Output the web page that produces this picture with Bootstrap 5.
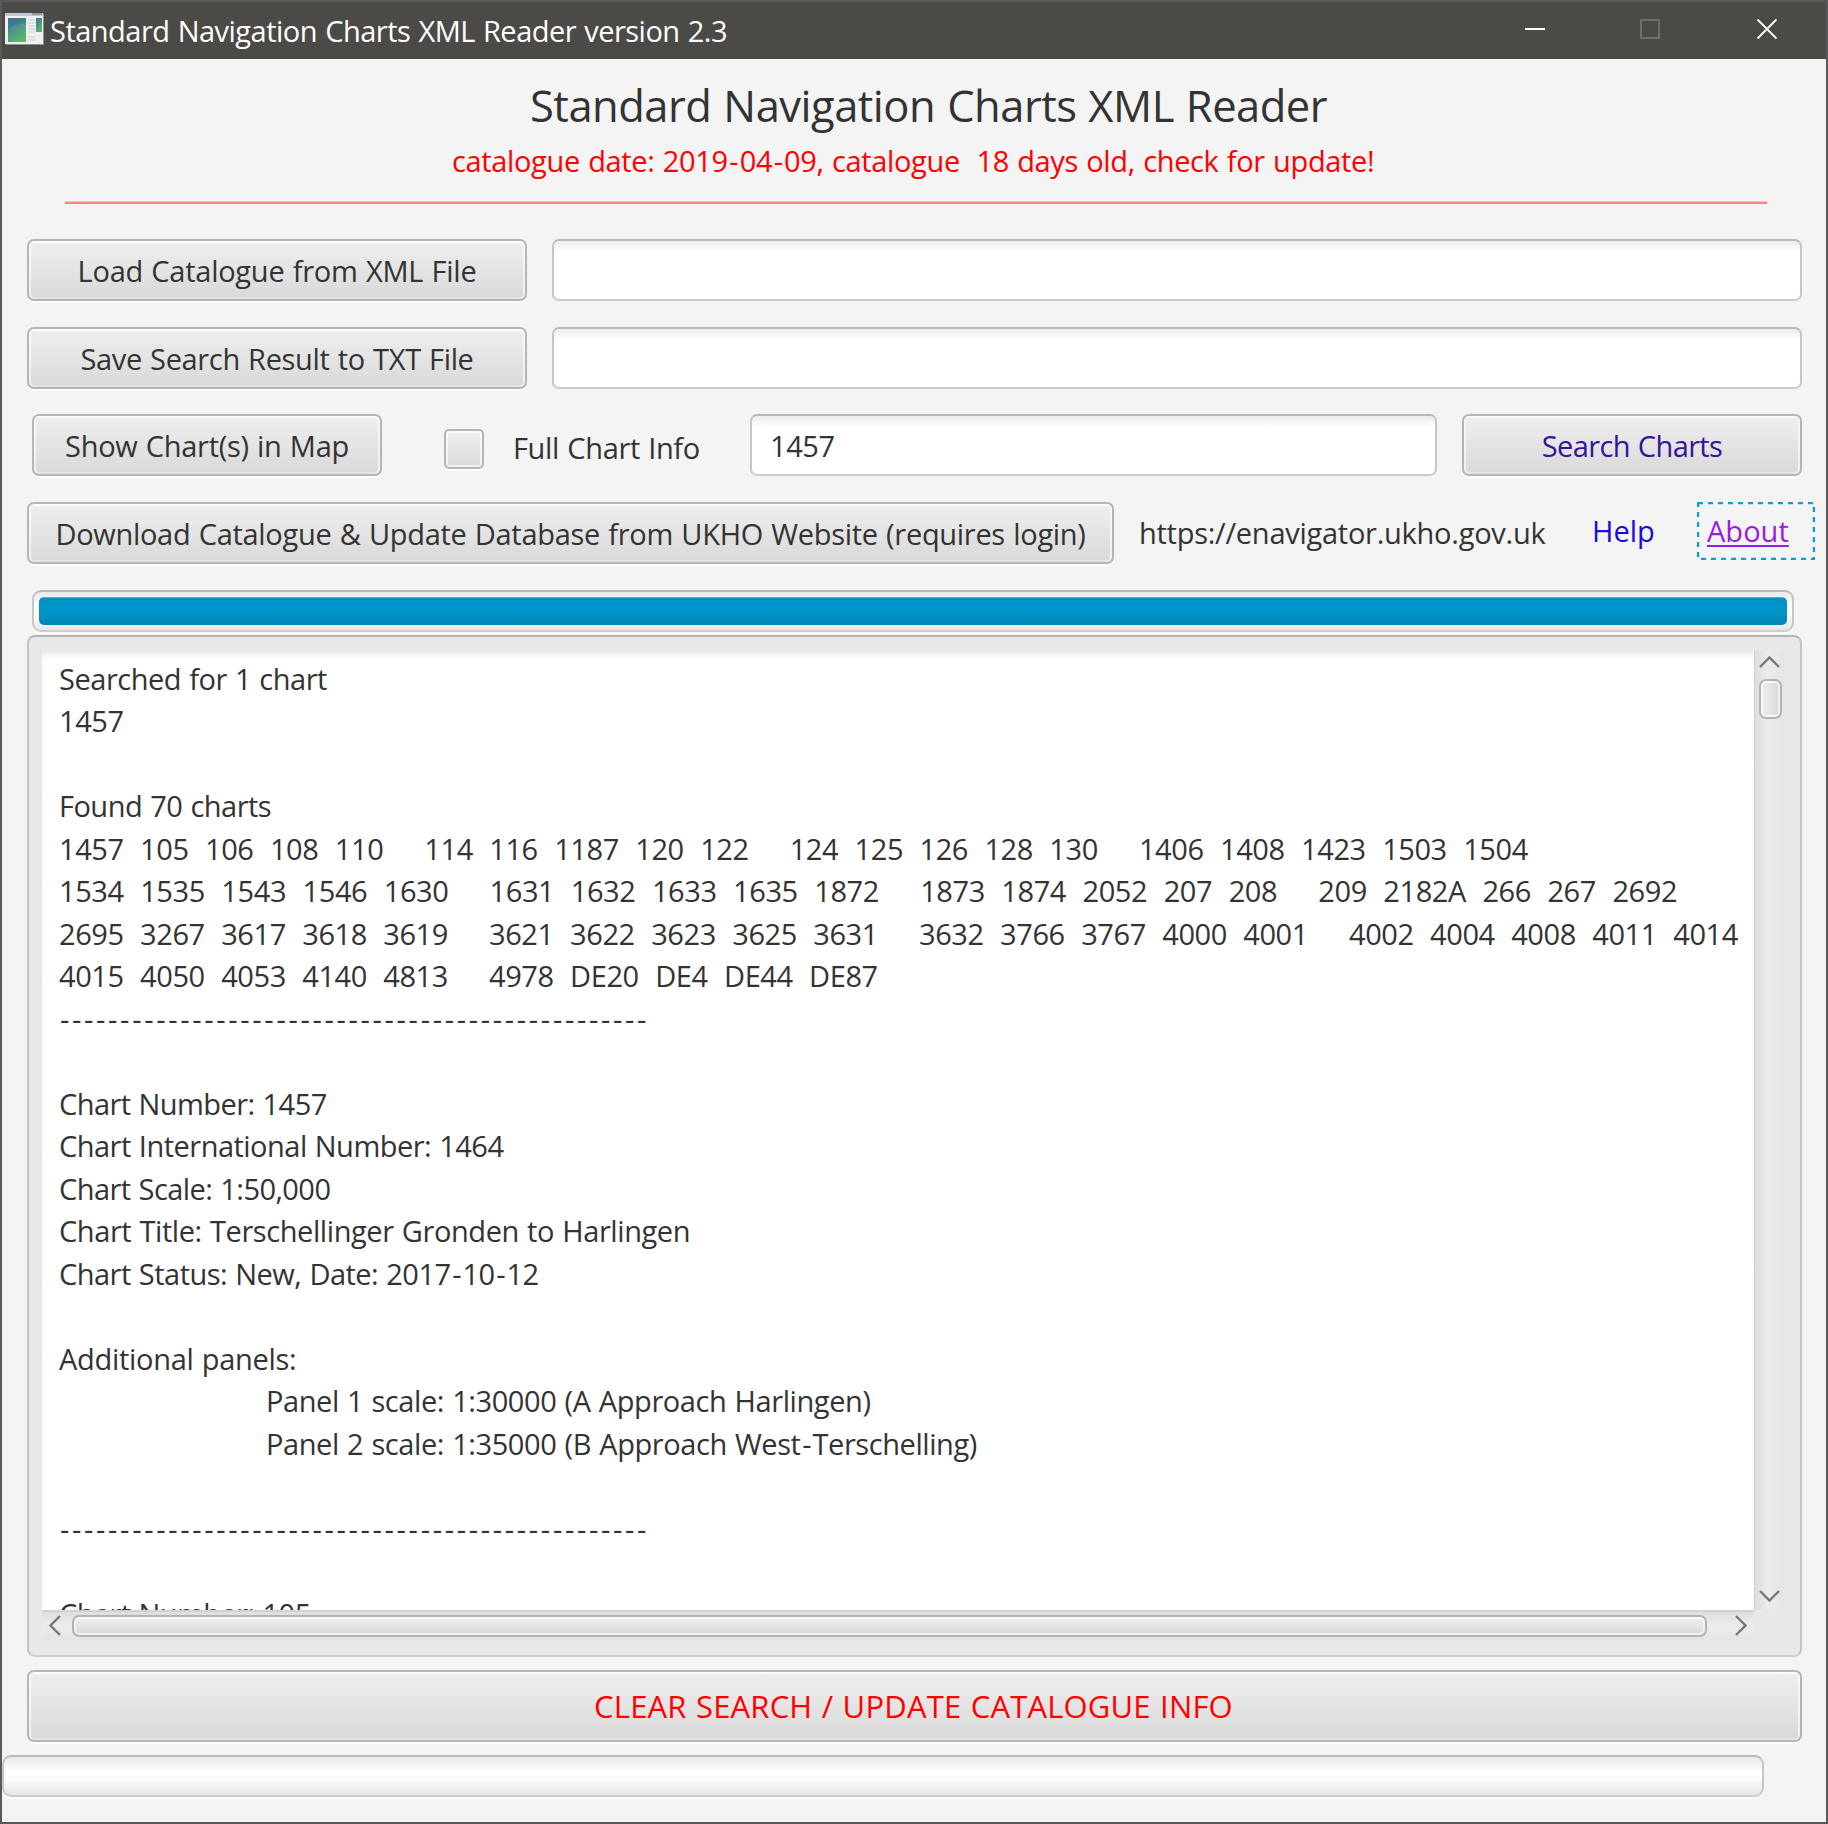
<!DOCTYPE html>
<html lang="en">
<head>
<meta charset="utf-8">
<title>Standard Navigation Charts XML Reader version 2.3</title>
<link href="https://cdn.jsdelivr.net/npm/bootstrap@5.3.0/dist/css/bootstrap.min.css" rel="stylesheet">
<style>
body{margin:0;font-family:"Open Sans","Noto Sans",sans-serif;font-size:29px;line-height:42.5px;color:#333;background:#f4f4f4;overflow:hidden}
.fx-window{width:1828px;height:1824px;border:2px solid #595959;background:#f4f4f4}
.fx-titlebar{height:57px;background:#4b4a47;color:#fff;padding-left:3px}
.fx-titlebar .t{margin:8px 0 0 5px;letter-spacing:-.51px}
.fx-controls{margin-right:49px}
.t{white-space:pre;display:inline-block;word-spacing:1.1px;letter-spacing:-.3px}
.hy{letter-spacing:1px;margin-left:1.6px}
.ls-25{letter-spacing:-.26px}.ls-35{letter-spacing:-.35px}.ls-42{letter-spacing:-.42px}.ls-47{letter-spacing:-.47px}.ls-52{letter-spacing:-.52px}.ls-56{letter-spacing:-.57px}.ls-62{letter-spacing:-.62px}
.ls-dash{letter-spacing:2.69px}.ls-0{letter-spacing:.03px}
.fx-heading{font-size:43.5px;line-height:60px;margin:17px 0 0 528px}
.fx-heading .t{letter-spacing:-.49px}
.fx-status{color:red;margin:4px 0 0 450px}
.fx-rule{height:3px;background:linear-gradient(#ffc4c2 1px,#ff8080 1px);margin:18.5px 59px 0 63px}
.fx-line{margin:25.5px 0 0 25px}
.fx-line.first{margin-top:35.25px}
.fx-btn{height:62px;padding:0;border:2px solid #b5b5b5;border-radius:7px;color:#333;font-size:29px;line-height:59px;
 background:linear-gradient(#efefef,#d9d9d9);box-shadow:inset 0 2px 0 #fcfcfc,inset 2px 0 0 rgba(255,255,255,.6),inset -2px 0 0 rgba(255,255,255,.6),inset 0 -2px 0 #e3e3e3,0 2px 0 #fcfcfc}
.w-file{width:500px}.w-map{width:350px;margin-left:5px}.w-search{width:340px;margin-left:25px;color:#36139a}.w-down{width:1087px}
.fx-btn .t{position:relative;vertical-align:top}
.fx-field{width:1250px;margin-left:25px;height:62px;border:2px solid;border-color:#b9b9b9 #c6c6c6 #cdcdcd;border-radius:7px;background:linear-gradient(#ececec,#fff 11px);padding:0 18px;line-height:59px}
.fx-query{width:687px;margin-left:0}
.fx-check{width:40px;height:40px;margin:15px 0 0 62px;border:2px solid #b5b5b5;border-radius:5px;background:linear-gradient(#efefef,#dadada);box-shadow:inset 0 0 0 2px rgba(255,255,255,.65),0 2px 0 #fcfcfc}
.fx-label{margin:13px 0 0 29px;width:237px}
.fx-url{margin:10px 0 0 25px;width:453px}
.fx-help{margin-top:8px;width:105px;color:#1a0be0;text-decoration:none}
.fx-about{height:60px;width:118px;color:#9a1ce0;text-decoration:none;padding:8px 0 0 10px}
.fx-about .t{text-decoration:underline;text-decoration-thickness:2px;text-underline-offset:3px;text-decoration-skip-ink:none}
.fx-bar{width:1762px;height:42px;border:2px solid;border-color:#b9b9b9 #c6c6c6 #cdcdcd;border-radius:9px;padding:5px;background:linear-gradient(#e9e9e9,#fff 40%,#fbfbfb 60%,#e7e7e7);box-shadow:0 2px 0 #fcfcfc}
.fx-bar.full{margin:24px 0 0 30px}
.fx-bar.idle{margin-top:13px}
.fx-bar>div{height:28px;border-radius:5px;background:linear-gradient(#4fb0d2 0 1px,#008fc0 1px,#0096c9 35%,#0094c6 60%,#0087b5)}
.fx-row4{height:64px}
.fx-area{width:1775px;height:1022px;margin:3px 0 0 25px;border:2px solid;border-color:#b5b5b5 #c4c4c4 #cdcdcd;border-radius:8px;background:#e8e8e8;padding:13px 0 0 13px}
.fx-text{width:1712px;height:960px;overflow:hidden;background:linear-gradient(#e8e8e8,#fff 9px);padding:8px 0 0 17px}
.fx-text>div{height:42.5px;white-space:nowrap}
.fx-text>.panel-line{padding-left:207px}
.fx-text>.dash-line{padding-left:1px}
.fx-vs{width:30px;height:960px;border-left:1px solid #d2d2d2;background:linear-gradient(90deg,#dedede,#ececec 45%,#e5e5e5);border-radius:0 4px 4px 0;padding-top:6px}
.fx-vs svg:last-child{margin-top:871px}
.fx-hs{width:1712px;height:30px;border-top:2px solid #d2d2d2;background:linear-gradient(#dedede,#ececec 45%,#e5e5e5);border-radius:0 0 4px 4px;padding:3px 0 0 7px}
.fx-hs svg:last-child{margin-left:28px}
.fx-vthumb{width:23px;height:40px;border:2px solid #b3b3b3;border-radius:7px;background:linear-gradient(90deg,#f0f0f0,#d8d8d8);box-shadow:inset 0 0 0 2px rgba(255,255,255,.7);margin:11px 0 0 4px}
.fx-hthumb{width:1635px;height:22px;border:2px solid #b3b3b3;border-radius:7px;background:linear-gradient(#f0f0f0,#d8d8d8);box-shadow:inset 0 0 0 2px rgba(255,255,255,.6);margin-left:11px}
.fx-clear{width:1775px;height:72px;line-height:66px;font-size:31px;color:red;margin:13px 0 0 25px}
.fx-clear .t{letter-spacing:.18px;left:-1px}
svg{display:block;flex:none}
.arrow{fill:none;stroke:#777;stroke-width:2.4}
</style>
</head>
<body>
<main class="fx-window d-flex flex-column">
 <header class="fx-titlebar d-flex align-items-start">
  <svg width="40" height="44" viewBox="0 0 40 44"><defs><linearGradient id="g" x2=".6" y2="1"><stop offset="0" stop-color="#3f73a0"/><stop offset="1" stop-color="#5cb56c"/></linearGradient></defs><rect x="1" y="12" width="38" height="31" fill="#8d9092"/><rect x="0" y="11" width="38" height="31" fill="#eef0f1"/><rect x="0" y="11" width="38" height="3" fill="#c0c9d0"/><rect x="27" y="11" width="10" height="2" fill="#8c979f"/><rect x="3" y="16" width="18" height="24" fill="url(#g)"/><path d="M3 28Q8 22 21 21V16H3z" fill="#3b7392" opacity=".6"/><path d="M23 18h7M23 21h7M23 24h7M23 27h7M23 30h7M23 35h7M23 38h7" stroke="#c9cdd0"/><rect x="31" y="16" width="6" height="14" fill="url(#g)"/></svg>
  <span class="t">Standard Navigation Charts XML Reader version 2.3</span>
  <svg class="fx-controls ms-auto" width="252" height="57" viewBox="0 0 252 57"><path d="M0 27h20" stroke="#fff" stroke-width="2"/><rect x="116" y="18" width="18" height="18" fill="none" stroke="#6d6c6a" stroke-width="2"/><path d="M232.500 17.500l19 19m0-19l-19 19" stroke="#fff" stroke-width="1.800"/></svg>
 </header>
 <div class="fx-heading"><span class="t">Standard Navigation Charts XML Reader</span></div>
 <div class="fx-status"><span class="t ls-35">catalogue date: 2019<span class="hy">-</span>04<span class="hy">-</span>09, catalogue  18 days old, check for update!</span></div>
 <div class="fx-rule"></div>
 <section class="fx-line first d-flex"><button class="btn fx-btn w-file"><span class="t ls-25">Load Catalogue from XML File</span></button><div class="fx-field"></div></section>
 <section class="fx-line d-flex"><button class="btn fx-btn w-file"><span class="t ls-35">Save Search Result to TXT File</span></button><div class="fx-field"></div></section>
 <section class="fx-line d-flex"><button class="btn fx-btn w-map"><span class="t">Show Chart(s) in Map</span></button><div class="fx-check"></div><label class="fx-label"><span class="t ls-35">Full Chart Info</span></label><div class="fx-field fx-query"><span class="t ls-42">1457</span></div><button class="btn fx-btn w-search"><span class="t ls-62">Search Charts</span></button></section>
 <section class="fx-line fx-row4 d-flex"><button class="btn fx-btn w-down"><span class="t">Download Catalogue &amp; Update Database from UKHO Website (requires login)</span></button><span class="fx-url"><span class="t ls-25">https://enavigator.ukho.gov.uk</span></span><a class="fx-help"><span class="t ls-0">Help</span></a><a class="fx-about position-relative"><svg class="position-absolute top-0 start-0" width="118" height="58"><rect x="1" y="1" width="116" height="56" fill="none" stroke="#00a0d8" stroke-width="2.400" stroke-dasharray="5 5"/></svg><span class="t ls-0">About</span></a></section>
 <div class="fx-bar full"><div></div></div>
 <section class="fx-area">
  <div class="d-flex"><div class="fx-text">
<div><span class="t ls-47">Searched for 1 chart</span></div>
<div><span class="t ls-42">1457</span></div>
<div></div>
<div><span class="t ls-52">Found 70 charts</span></div>
<div><span class="t ls-42">1457  105  106  108  110     114  116  1187  120  122     124  125  126  128  130     1406  1408  1423  1503  1504</span></div>
<div><span class="t" style="letter-spacing:-.403px">1534  1535  1543  1546  1630     1631  1632  1633  1635  1872     1873  1874  2052  207  208     209  2182A  266  267  2692</span></div>
<div><span class="t ls-42">2695  3267  3617  3618  3619     3621  3622  3623  3625  3631     3632  3766  3767  4000  4001     4002  4004  4008  4011  4014</span></div>
<div><span class="t ls-42">4015  4050  4053  4140  4813     4978  DE20  DE4  DE44  DE87</span></div>
<div class="dash-line"><span class="t ls-dash">-------------------------------------------------</span></div>
<div></div>
<div><span class="t ls-56">Chart Number: 1457</span></div>
<div><span class="t ls-52">Chart International Number: 1464</span></div>
<div><span class="t ls-56">Chart Scale: 1:50,000</span></div>
<div><span class="t ls-42">Chart Title: Terschellinger Gronden to Harlingen</span></div>
<div><span class="t ls-52">Chart Status: New, Date: 2017<span class="hy">-</span>10<span class="hy">-</span>12</span></div>
<div></div>
<div><span class="t">Additional panels:</span></div>
<div class="panel-line"><span class="t ls-42">Panel 1 scale: 1:30000 (A Approach Harlingen)</span></div>
<div class="panel-line"><span class="t ls-42">Panel 2 scale: 1:35000 (B Approach West<span class="hy">-</span>Terschelling)</span></div>
<div></div>
<div class="dash-line"><span class="t ls-dash">-------------------------------------------------</span></div>
<div></div>
<div><span class="t ls-56">Chart Number: 105</span></div>
  </div>
  <div class="fx-vs"><svg width="30" height="12"><path class="arrow" d="M5 11l9.500-9.500L24 11"/></svg><div class="fx-vthumb"></div><svg width="30" height="12"><path class="arrow" d="M5 1l9.500 9.500L24 1"/></svg></div></div>
  <div class="fx-hs d-flex align-items-start"><svg width="12" height="22"><path class="arrow" d="M11 1L1.500 10.500 11 20"/></svg><div class="fx-hthumb"></div><svg width="12" height="22"><path class="arrow" d="M1 1l9.500 9.500L1 20"/></svg></div>
 </section>
 <button class="btn fx-btn fx-clear"><span class="t">CLEAR SEARCH / UPDATE CATALOGUE INFO</span></button>
 <div class="fx-bar idle"></div>
</main>
<script src="https://cdn.jsdelivr.net/npm/bootstrap@5.3.0/dist/js/bootstrap.bundle.min.js"></script>
</body>
</html>
